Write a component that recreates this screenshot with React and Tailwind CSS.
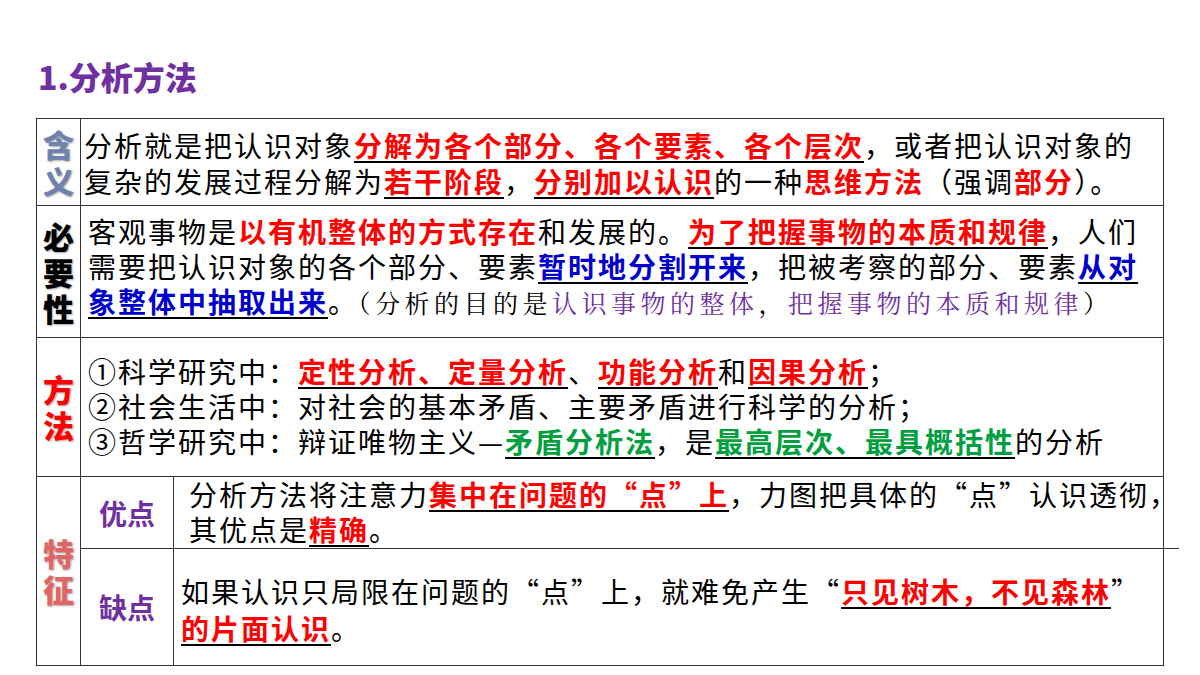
import React from 'react';

const R = ({ children, u = true }) => (
  <span className={`text-[#ff0000] font-semibold ${u ? 'underline decoration-black decoration-2 underline-offset-4' : ''}`}>{children}</span>
);
const B = ({ children }) => (
  <span className="text-[#0000cc] font-semibold underline decoration-black decoration-2 underline-offset-4">{children}</span>
);
const G = ({ children }) => (
  <span className="text-[#00a040] font-semibold underline decoration-black decoration-2 underline-offset-4">{children}</span>
);

const Head = ({ children, color }) => (
  <div className={`font-black text-[31px] leading-[36px] tracking-normal text-center ${color}`} style={{ textShadow: '1px 1px 2px rgba(0,0,0,0.35)' }}>
    {children}
  </div>
);

export default function App() {
  return (
    <div className="w-[1200px] h-[675px] bg-white relative overflow-hidden" style={{ fontFamily: '"Noto Sans CJK SC", "Noto Sans", sans-serif' }}>
      <div className="pt-[55px] pl-[38px] text-[32px] font-black text-[#7030a0] leading-[42px]">1.分析方法</div>
      <div className="ml-[36px] mt-[21px] w-[1128px] border border-[#333] text-[28px] tracking-[2px] text-black">
        {/* 含义 */}
        <div className="flex h-[87px] border-b border-[#333]">
          <div className="w-[44px] shrink-0 border-r border-[#333] flex flex-col items-center justify-center">
            <Head color="text-[#6f82ad]">含<br />义</Head>
          </div>
          <div className="pl-[3px] leading-[36px] whitespace-nowrap pt-[8px]">
            分析就是把认识对象<R>分解为各个部分、各个要素、各个层次</R>，或者把认识对象的<br />
            复杂的发展过程分解为<R>若干阶段</R>，<R>分别加以认识</R>的一种<R u={false}>思维方法</R>（强调<R u={false}>部分</R>）。
          </div>
        </div>
        {/* 必要性 */}
        <div className="flex h-[132px] border-b border-[#333]">
          <div className="w-[44px] shrink-0 border-r border-[#333] flex flex-col items-center justify-center">
            <Head color="text-black">必<br />要<br />性</Head>
          </div>
          <div className="pl-[7px] leading-[35px] whitespace-nowrap pt-[8px]">
            客观事物是<R u={false}>以有机整体的方式存在</R>和发展的。<R>为了把握事物的本质和规律</R>，人们<br />
            需要把认识对象的各个部分、要素<B>暂时地分割开来</B>，把被考察的部分、要素<B>从对</B><br />
            <B>象整体中抽取出来</B>。<span className="text-[25px] tracking-[4.5px]" style={{ fontFamily: '"Noto Serif CJK SC", "Noto Sans CJK SC", serif' }}>（分析的目的是<span className="text-[#7030a0]">认识事物的整体</span>，<span className="text-[#7030a0]">把握事物的本质和规律</span>）</span>
          </div>
        </div>
        {/* 方法 */}
        <div className="flex h-[139px] border-b border-[#333]">
          <div className="w-[44px] shrink-0 border-r border-[#333] flex flex-col items-center justify-center">
            <Head color="text-[#ff0000]">方<br />法</Head>
          </div>
          <div className="pl-[7px] leading-[35px] whitespace-nowrap pt-[16px]">
            ①科学研究中：<R>定性分析、定量分析</R>、<R>功能分析</R>和<R>因果分析</R>；<br />
            ②社会生活中：对社会的基本矛盾、主要矛盾进行科学的分析；<br />
            ③哲学研究中：辩证唯物主义—<G>矛盾分析法</G>，是<G>最高层次、最具概括性</G>的分析
          </div>
        </div>
        {/* 特征 */}
        <div className="flex h-[188px]">
          <div className="w-[44px] shrink-0 border-r border-[#333] flex flex-col items-center justify-center">
            <Head color="text-[#e06666]">特<br />征</Head>
          </div>
          <div className="flex-1 flex flex-col">
            <div className="flex h-[72px] border-b border-[#333]">
              <div className="w-[93px] shrink-0 border-r border-[#333] flex items-center justify-center text-[28px] font-semibold text-[#7030a0] tracking-normal">优点</div>
              <div className="pl-[15px] leading-[35px] whitespace-nowrap pt-[0px]">
                分析方法将注意力<R>集中在问题的“点”上</R>，力图把具体的“点”认识透彻，<br />
                其优点是<R>精确</R>。
              </div>
            </div>
            <div className="flex flex-1">
              <div className="w-[93px] shrink-0 border-r border-[#333] flex items-center justify-center text-[28px] font-semibold text-[#7030a0] tracking-normal">缺点</div>
              <div className="pl-[7px] leading-[37px] whitespace-nowrap pt-[24px]">
                如果认识只局限在问题的“点”上，就难免产生“<R>只见树木，不见森林</R>”<br />
                <R>的片面认识</R>。
              </div>
            </div>
          </div>
        </div>
      </div>
    </div>
  );
}
